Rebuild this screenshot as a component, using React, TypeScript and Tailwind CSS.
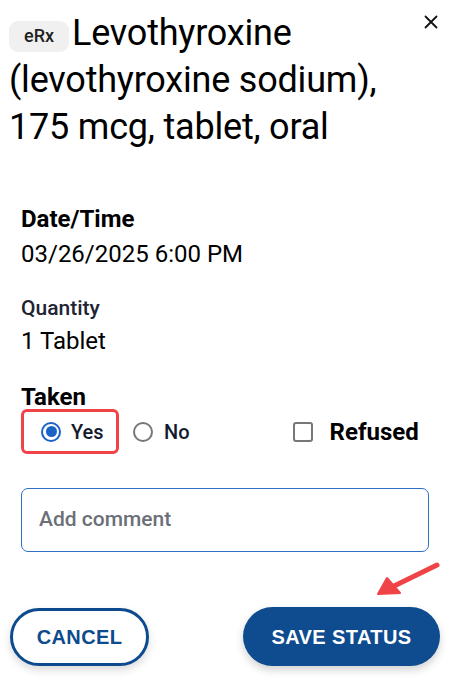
import React, { useState } from 'react';

export default function App() {
  const [taken, setTaken] = useState<'yes' | 'no'>('yes');
  const [refused, setRefused] = useState(false);

  return (
    <div className="relative w-[467px] h-[692px] bg-white overflow-hidden text-black" style={{ fontFamily: 'Roboto, "Liberation Sans", sans-serif' }}>
      {/* header */}
      <div className="flex items-start pl-[9px] pr-[28px] pt-[10px]">
        <h1 className="flex-1 text-[36px] leading-[47px] font-normal tracking-[-0.2px]">
          <span className="inline-flex items-center justify-center align-[3px] w-[60px] h-[31px] mr-[3px] rounded-[9px] bg-[#f0f0f0] text-[18px] leading-none font-medium text-[#222] tracking-normal">
            eRx
          </span>
          Levothyroxine (levothyroxine sodium), 175 mcg, tablet, oral
        </h1>
        <button className="mt-[4px] w-[16px] h-[16px] flex items-center justify-center">
          <svg width="14" height="14" viewBox="0 0 14 14" stroke="#111" strokeWidth="1.8" strokeLinecap="round">
            <path d="M1.5 1.5 L12.5 12.5 M12.5 1.5 L1.5 12.5" />
          </svg>
        </button>
      </div>

      {/* body */}
      <div className="mt-[54px] px-[21px]">
        <div className="text-[24px] leading-[28px] font-bold">Date/Time</div>
        <div className="mt-[7px] text-[24px] leading-[28px]">03/26/2025 6:00 PM</div>

        <div className="mt-[28px] text-[21px] leading-[24px] font-medium text-[#1e2433]">Quantity</div>
        <div className="mt-[7px] text-[24px] leading-[28px]">1 Tablet</div>

        <div className="mt-[28px] text-[24px] leading-[28px] font-bold">Taken</div>
        <div className="mt-[-2px] flex items-center">
          <label
            onClick={() => setTaken('yes')}
            className="flex items-center w-[98px] h-[45px] pl-[17px] rounded-[6px] border-[3px] border-[#f04348] cursor-pointer"
          >
            <span className="w-[20px] h-[20px] rounded-full border-2 border-[#1a63c6] flex items-center justify-center">
              {taken === 'yes' && <span className="w-[11px] h-[11px] rounded-full bg-[#1a63c6]" />}
            </span>
            <span className="ml-[10px] text-[20px] font-medium text-[#121a2e]">Yes</span>
          </label>
          <label onClick={() => setTaken('no')} className="ml-[14px] flex items-center cursor-pointer">
            <span className="w-[20px] h-[20px] rounded-full border-2 border-[#777] flex items-center justify-center">
              {taken === 'no' && <span className="w-[11px] h-[11px] rounded-full bg-[#1a63c6]" />}
            </span>
            <span className="ml-[11px] text-[20px] font-medium text-[#121a2e]">No</span>
          </label>
          <label onClick={() => setRefused(!refused)} className="ml-[103px] flex items-center cursor-pointer">
            <span className="w-[20px] h-[20px] rounded-[3px] border-2 border-[#777] bg-white" />
            <span className="ml-[17px] text-[24px] font-bold">Refused</span>
          </label>
        </div>

        <div className="mt-[34px] w-[408px] h-[64px] rounded-[7px] border-[1.5px] border-[#2f6fc4] flex items-center px-[17px]">
          <input
            placeholder="Add comment"
            className="w-full outline-none text-[21px] font-medium placeholder:text-[#6b6f78]"
          />
        </div>
      </div>

      {/* footer */}
      <div className="mt-[55px] flex items-center justify-between pl-[10px] pr-[27px]" style={{ fontFamily: '"Liberation Sans", Arial, sans-serif' }}>
        <button className="w-[139px] h-[58px] rounded-full border-[3px] border-[#0e4a8e] bg-white text-[#0e4a8e] text-[20px] font-bold tracking-[0.4px] shadow-[0_4px_8px_rgba(0,0,0,0.15)]">
          CANCEL
        </button>
        <button className="w-[197px] h-[59px] rounded-full bg-[#0e4c8f] text-white text-[20px] font-bold tracking-[0.4px] shadow-[0_4px_8px_rgba(0,0,0,0.18)]">
          SAVE STATUS
        </button>
      </div>

      {/* annotation arrow */}
      <svg className="absolute left-[370px] top-[556px]" width="76" height="46" viewBox="0 0 76 46">
        <path d="M67 9 L18 33" stroke="#f04348" strokeWidth="5" strokeLinecap="round" />
        <path d="M8 38 L17 22 L30 37 Z" fill="#f04348" stroke="#f04348" strokeWidth="2" strokeLinejoin="round" />
      </svg>
    </div>
  );
}
